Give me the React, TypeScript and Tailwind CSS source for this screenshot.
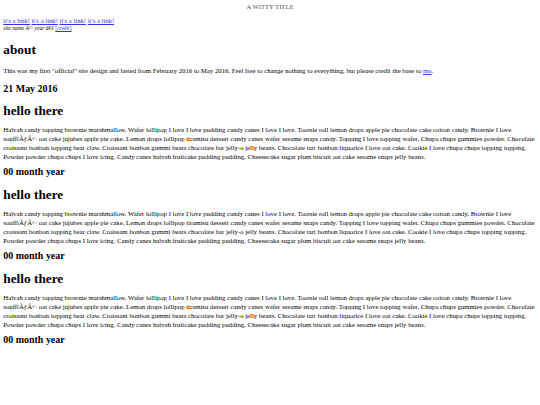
const serif = "font-['Liberation_Serif','Times_New_Roman',serif]";

const filler =
  "Halvah candy topping brownie marshmallow. Wafer lollipop I love I love pudding candy canes I love I love. Tootsie roll lemon drops apple pie chocolate cake cotton candy. Brownie I love soufflÃƒÂ© oat cake jujubes apple pie cake. Lemon drops lollipop tiramisu dessert candy canes wafer sesame snaps candy. Topping I love topping wafer. Chupa chups gummies powder. Chocolate croissant bonbon topping bear claw. Croissant bonbon gummi bears chocolate bar jelly-o jelly beans. Chocolate tart bonbon liquorice I love oat cake. Cookie I love chupa chups topping topping. Powder powder chupa chups I love icing. Candy canes halvah fruitcake pudding pudding. Cheesecake sugar plum biscuit oat cake sesame snaps jelly beans.";

function Post({ date, first }: { date: string; first?: boolean }) {
  return (
    <>
      <h1
        className={`${first ? "mt-[8px]" : "mt-[9px]"} text-[13.3px] leading-[16px] font-bold`}
      >
        hello there
      </h1>
      <p className="mt-[5.5px] text-[6.75px] leading-[9px]">{filler}</p>
      <h2 className="mt-[5.5px] text-[9.96px] leading-[12px] font-bold">{date}</h2>
    </>
  );
}

export default function App() {
  return (
    <div className={`min-h-[405px] bg-white text-black px-[3.3px] ${serif}`}>
      <header className="pt-[3px] text-center text-[6.64px] leading-[8px] text-[#555]">
        A WITTY TITLE
      </header>

      <nav className="mt-[6px]">
        <div className="text-[6.7px] leading-[8px]">
          {["one", "two", "three", "four"].map((k, i) => (
            <span key={k}>
              {i > 0 && " "}
              <a href="#" className="text-[#3333ee] underline">
                it's a link!
              </a>
            </span>
          ))}
        </div>
        <div className="text-[5.5px] leading-[7px] italic">
          site name Â© year â€¢{" "}
          <a href="#" className="text-[#3333ee] underline not-italic">
            [credit]
          </a>
        </div>
      </nav>

      <main>
        <h1 className="mt-[10px] text-[13.3px] leading-[16px] font-bold">about</h1>
        <p className="mt-[9px] text-[6.75px] leading-[8px]">
          This was my first "official" site design and lasted from February 2016 to May 2016.
          Feel free to change nothing to everything, but please credit the base to{" "}
          <a href="#" className="text-[#3333ee] underline">
            me
          </a>
          .
        </p>
        <h2 className="mt-[8px] text-[9.96px] leading-[12px] font-bold">21 May 2016</h2>

        <Post date="00 month year" first />
        <Post date="00 month year" />
        <Post date="00 month year" />
      </main>
    </div>
  );
}
